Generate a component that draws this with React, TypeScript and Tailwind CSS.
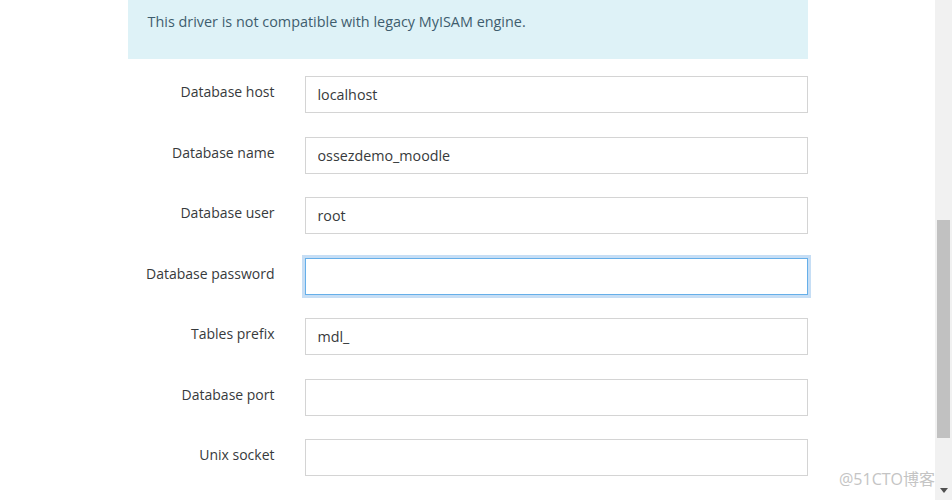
import React from "react";

const fields = [
  { label: "Database host", value: "localhost" },
  { label: "Database name", value: "ossezdemo_moodle" },
  { label: "Database user", value: "root" },
  { label: "Database password", value: "", focused: true },
  { label: "Tables prefix", value: "mdl_" },
  { label: "Database port", value: "" },
  { label: "Unix socket", value: "" },
];

export default function App() {
  return (
    <div
      className="relative flex h-[500px] w-[952px] overflow-hidden bg-white text-[#373a3c]"
      style={{ fontFamily: '"Open Sans", "Noto Sans CJK SC", sans-serif' }}
    >
      <div className="flex-1">
        <div className="mx-auto w-[680px]">
          <div className="h-[59px] bg-[#def2f7] px-5 pt-[11px] text-[14.4px] text-[#3e5d6e]">
            This driver is not compatible with legacy MyISAM engine.
          </div>

          <div className="pt-[17px]">
            {fields.map((f) => (
              <div key={f.label} className="mb-[23.5px] flex">
                <label className="w-[177px] shrink-0 pr-[30px] pt-[5px] text-right text-[14px] text-[#373a3c]">
                  {f.label}
                </label>
                <input
                  readOnly
                  value={f.value}
                  className={
                    f.focused
                      ? "h-[37px] w-[503px] border border-[#66afe9] bg-white px-3 text-[14.3px] text-[#373a3c] outline-none ring-[3px] ring-[#c6def5]"
                      : "h-[37px] w-[503px] border border-[#d4d4d4] bg-white px-3 text-[14.3px] text-[#373a3c] outline-none"
                  }
                />
              </div>
            ))}
          </div>
        </div>
      </div>

      <div className="flex w-[17px] shrink-0 flex-col bg-[#f1f1f1]">
        <div className="h-[220px]" />
        <div className="mx-auto h-[218px] w-[13px] bg-[#c1c1c1]" />
        <div className="flex flex-1 items-end justify-center pb-[7px]">
          <svg width="8" height="5" viewBox="0 0 8 5">
            <path d="M0 0 L8 0 L4 5 Z" fill="#505050" />
          </svg>
        </div>
      </div>

      <div className="absolute bottom-[9px] right-[17px] text-[16px] text-[#c4c4c4]">
        @51CTO博客
      </div>
    </div>
  );
}
